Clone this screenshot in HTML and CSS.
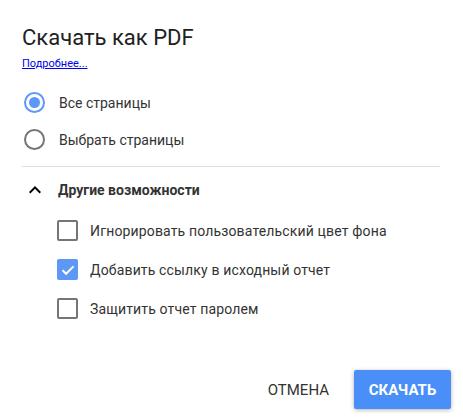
FILE: index.html
```html
<!DOCTYPE html>
<html lang="ru">
<head>
    <meta charset="UTF-8">
    <title>Скачать как PDF</title>
    <link rel="stylesheet" href="styles.css">
</head>
<body>
    <div class="dialog">
        <h1 class="title">Скачать как PDF</h1>
        <a class="more" href="#">Подробнее...</a>

        <div class="radios">
            <div class="radio-row">
                <span class="radio checked"><span class="dot"></span></span>
                <span class="label">Все страницы</span>
            </div>
            <div class="radio-row">
                <span class="radio"></span>
                <span class="label">Выбрать страницы</span>
            </div>
        </div>

        <div class="divider"></div>

        <div class="section-head">
            <svg class="chevron" width="24" height="24" viewBox="0 0 24 24">
                <path d="M12 8l-6 6 1.41 1.41L12 10.83l4.59 4.58L18 14z" fill="#000"/>
            </svg>
            <span class="section-title">Другие возможности</span>
        </div>

        <div class="options">
            <div class="check-row">
                <span class="checkbox"></span>
                <span class="label wide">Игнорировать пользовательский цвет фона</span>
            </div>
            <div class="check-row">
                <span class="checkbox checked">
                    <svg width="20" height="20" viewBox="0 0 20 20">
                        <path d="M4.5 10.2l3.6 3.6 7.4-7.4" fill="none" stroke="#fff" stroke-width="2"/>
                    </svg>
                </span>
                <span class="label wide">Добавить ссылку в исходный отчет</span>
            </div>
            <div class="check-row">
                <span class="checkbox"></span>
                <span class="label wide">Защитить отчет паролем</span>
            </div>
        </div>

        <div class="actions">
            <button class="btn cancel">Отмена</button>
            <button class="btn primary">Скачать</button>
        </div>
    </div>
</body>
</html>
```

FILE: styles.css
```css
* {
    margin: 0;
    padding: 0;
    box-sizing: border-box;
}

body {
    font-family: Roboto, "Liberation Sans", sans-serif;
    background-color: #fff;
    color: #333;
}

.dialog {
    width: 463px;
    height: 418px;
    padding: 26px 0 0 22px;
}

.title {
    font-size: 22px;
    font-weight: 400;
    line-height: 24px;
    color: #212121;
}

.more {
    display: block;
    margin-top: 7px;
    font-size: 11px;
    line-height: 14px;
    color: #0000ee;
    text-decoration: underline;
    width: max-content;
}

.radios {
    margin-top: 13px;
}

.radio-row {
    display: flex;
    align-items: center;
    height: 37px;
    padding-left: 2px;
}

.radio {
    width: 21px;
    height: 21px;
    border: 2px solid #757575;
    border-radius: 50%;
    display: flex;
    align-items: center;
    justify-content: center;
    margin-right: 14px;
}

.radio.checked {
    border-color: #5e97f6;
}

.radio .dot {
    width: 11px;
    height: 11px;
    border-radius: 50%;
    background-color: #5e97f6;
}

.label {
    font-size: 14px;
    color: #333;
}

.label.wide {
    letter-spacing: 0.15px;
}

.divider {
    margin-top: 8px;
    width: 418px;
    height: 1px;
    background-color: #e0e0e0;
}

.section-head {
    display: flex;
    align-items: center;
    height: 30px;
    margin-top: 8px;
}

.chevron {
    margin-left: 1px;
    margin-right: 11px;
}

.section-title {
    font-size: 14px;
    font-weight: 700;
    color: #333;
}

.options {
    margin-top: 6px;
}

.check-row {
    display: flex;
    align-items: center;
    height: 39px;
    padding-left: 35px;
}

.checkbox {
    width: 21px;
    height: 21px;
    border: 2px solid #757575;
    border-radius: 2px;
    margin-right: 12px;
    display: flex;
    align-items: center;
    justify-content: center;
}

.checkbox.checked {
    border: none;
    background-color: #5e97f6;
}

.actions {
    display: flex;
    justify-content: flex-end;
    align-items: center;
    gap: 12px;
    margin-top: 42px;
    padding-right: 12px;
}

.btn {
    font-family: Roboto, "Liberation Sans", sans-serif;
    font-size: 15px;
    text-transform: uppercase;
    border: none;
    border-radius: 2px;
    height: 39px;
    padding: 0 13px;
    background: none;
    cursor: pointer;
}

.btn.cancel {
    color: #333;
    font-weight: 400;
}

.btn.primary {
    width: 97px;
    padding: 0;
    background-color: #4a8ff8;
    color: #fff;
    font-weight: 700;
    box-shadow: 0 1px 4px rgba(0, 0, 0, 0.3);
}
```
